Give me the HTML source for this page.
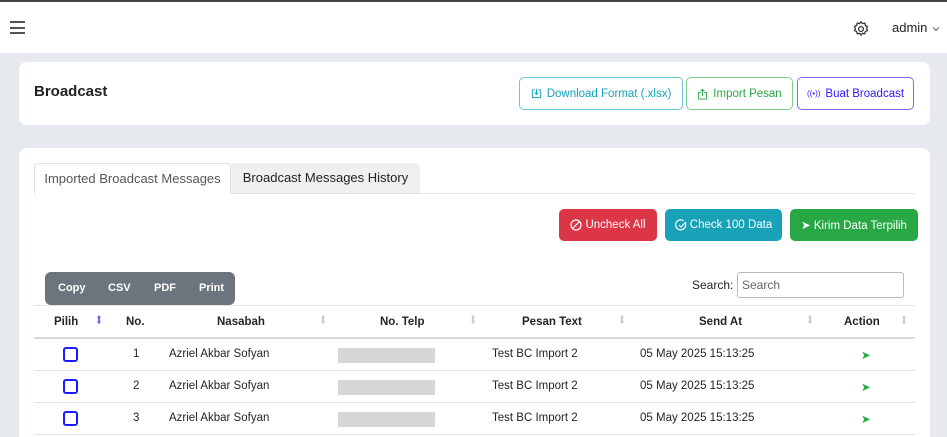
<!DOCTYPE html>
<html><head><style>
*{box-sizing:border-box;margin:0;padding:0}
html,body{width:947px;height:437px;overflow:hidden}
body{background:#e6e9ed;font-family:"Liberation Sans",Arial,sans-serif;position:relative;color:#212529}
.abs{position:absolute}
.top{left:0;top:0;width:947px;height:53px;background:#fff;border-top:2px solid #444}
.card{background:#fff;border-radius:8px}
.btn{position:absolute;border-radius:5px;font-size:11.5px;display:flex;align-items:center;justify-content:center;gap:5px}
.ob{border:1px solid}
.sb{color:#fff;font-size:11.5px}
.row{position:absolute;left:34px;width:881px;height:32px;border-bottom:1px solid #e3e3e3}
.c{position:absolute;font-size:11.5px;top:9px}
.h{font-weight:bold;top:10px}
.sort{position:absolute;top:7px;font-size:12px;color:#ccc;transform:scaleX(.7)}
.chk{position:absolute;left:29px;top:8px;width:15px;height:15px;border:2px solid #1a1aff;border-radius:3px}
.gray{position:absolute;left:304px;top:9px;width:97px;height:15px;background:#d6d6d6}
</style></head><body>
<div class="abs top">
 <div class="abs" style="left:10px;top:19px;width:15px;height:13px;border-top:2px solid #555;border-bottom:2px solid #555"><div style="margin-top:3.5px;border-top:2px solid #555"></div></div>
 <svg class="abs" style="left:852px;top:18px" width="18" height="18" viewBox="0 0 24 24" fill="none" stroke="#333" stroke-width="1.7"><circle cx="12" cy="12" r="3.2"/><path d="M12 2.5l2 2.3 3-.6.8 3 2.7 1.3-1 2.8 1 2.8-2.7 1.3-.8 3-3-.6-2 2.3-2-2.3-3 .6-.8-3-2.7-1.3 1-2.8-1-2.8 2.7-1.3.8-3 3 .6z"/></svg>
 <div class="abs" style="left:892px;top:18px;font-size:13px;color:#222">admin</div>
 <svg class="abs" style="left:932px;top:24px" width="8" height="6" viewBox="0 0 8 6"><path d="M1 1.5l3 3 3-3" fill="none" stroke="#666" stroke-width="1"/></svg>
</div>
<div class="abs card" style="left:19px;top:62px;width:911px;height:63px"></div>
<div class="abs" style="left:34px;top:83px;font-size:15px;font-weight:bold;color:#222">Broadcast</div>
<div class="btn ob" style="left:519px;top:77px;width:164px;height:33px;border-color:#6cc6d3;color:#17a2b8"><svg width="11" height="11" viewBox="0 0 12 12" fill="none" stroke="#17a2b8"><path d="M4 2H1.5v8.5h9V2H8M6 1v6M4 5l2 2 2-2"/></svg>Download Format (.xlsx)</div>
<div class="btn ob" style="left:686px;top:77px;width:107px;height:33px;border-color:#7cd08f;color:#28a745"><svg width="11" height="12" viewBox="0 0 12 12" fill="none" stroke="#28a745"><path d="M4 4.5H1.5v7h9v-7H8M6 8V1M4 3l2-2 2 2"/></svg>Import Pesan</div>
<div class="btn ob" style="left:797px;top:77px;width:117px;height:33px;border-color:#7b6cff;color:#2b16ff"><span style="font-size:8px">((•))</span>Buat Broadcast</div>

<div class="abs card" style="left:19px;top:148px;width:911px;height:300px"></div>
<div class="abs" style="left:34px;top:193px;width:881px;border-top:1px solid #e3e3e3"></div>
<div class="abs" style="left:34px;top:163px;width:197px;height:31px;background:#fff;border:1px solid #e3e3e3;border-bottom:none;border-radius:4px 4px 0 0;font-size:13px;color:#555;text-align:center;line-height:30px">Imported Broadcast Messages</div>
<div class="abs" style="left:231px;top:163px;width:189px;height:30px;background:#efefef;border-radius:4px 4px 0 0;font-size:13px;color:#222;text-align:center;line-height:30px">Broadcast Messages History</div>

<div class="btn sb" style="left:559px;top:209px;width:98px;height:32px;background:#dc3545;gap:3px"><svg width="12" height="12" viewBox="0 0 12 12" fill="none" stroke="#fff" stroke-width="1.2"><circle cx="6" cy="6" r="5"/><path d="M2.5 9.5l7-7"/></svg>Uncheck All</div>
<div class="btn sb" style="left:665px;top:209px;width:117px;height:32px;background:#17a2b8;gap:3px"><svg width="12" height="12" viewBox="0 0 12 12" fill="none" stroke="#fff" stroke-width="1.2"><path d="M10.5 4.5A5 5 0 1 1 8.5 1.7M4 6l2 2 5-5"/></svg>Check 100 Data</div>
<div class="btn sb" style="left:790px;top:209px;width:128px;height:32px;background:#28a745;gap:3px">➤ Kirim Data Terpilih</div>

<div class="abs" style="left:45px;top:272px;width:190px;height:33px;background:#6c757d;border-radius:6px;color:#fff;font-size:11px;font-weight:bold">
 <span class="abs" style="left:13px;top:10px">Copy</span><span class="abs" style="left:63px;top:10px">CSV</span><span class="abs" style="left:109px;top:10px">PDF</span><span class="abs" style="left:154px;top:10px">Print</span>
</div>
<div class="abs" style="left:692px;top:278px;font-size:12px">Search:</div>
<div class="abs" style="left:737px;top:272px;width:167px;height:26px;border:1px solid #bbb;border-radius:3px;font-size:12px;color:#666;padding:5px 4px">Search</div>

<div class="row" style="top:305px;height:34px;border-top:1px solid #e3e3e3;border-bottom:2px solid #d8d8d8">
 <span class="c h" style="left:20px">Pilih</span><span class="sort" style="left:60px;color:#7060ff">⬍</span>
 <span class="c h" style="left:92px">No.</span>
 <span class="c h" style="left:183px">Nasabah</span><span class="sort" style="left:284px">⬍</span>
 <span class="c h" style="left:346px">No. Telp</span><span class="sort" style="left:434px">⬍</span>
 <span class="c h" style="left:488px">Pesan Text</span><span class="sort" style="left:583px">⬍</span>
 <span class="c h" style="left:665px">Send At</span><span class="sort" style="left:771px">⬍</span>
 <span class="c h" style="left:810px">Action</span><span class="sort" style="left:865px">⬍</span>
</div>
<div class="row" style="top:339px"><div class="chk"></div><span class="c" style="left:99px">1</span><span class="c" style="left:135px">Azriel Akbar Sofyan</span><div class="gray"></div><span class="c" style="left:458px">Test BC Import 2</span><span class="c" style="left:606px">05 May 2025 15:13:25</span><span class="c" style="left:827px;color:#28a745">➤</span></div>
<div class="row" style="top:371px"><div class="chk"></div><span class="c" style="left:99px">2</span><span class="c" style="left:135px">Azriel Akbar Sofyan</span><div class="gray"></div><span class="c" style="left:458px">Test BC Import 2</span><span class="c" style="left:606px">05 May 2025 15:13:25</span><span class="c" style="left:827px;color:#28a745">➤</span></div>
<div class="row" style="top:403px"><div class="chk"></div><span class="c" style="left:99px">3</span><span class="c" style="left:135px">Azriel Akbar Sofyan</span><div class="gray"></div><span class="c" style="left:458px">Test BC Import 2</span><span class="c" style="left:606px">05 May 2025 15:13:25</span><span class="c" style="left:827px;color:#28a745">➤</span></div>
</body></html>
